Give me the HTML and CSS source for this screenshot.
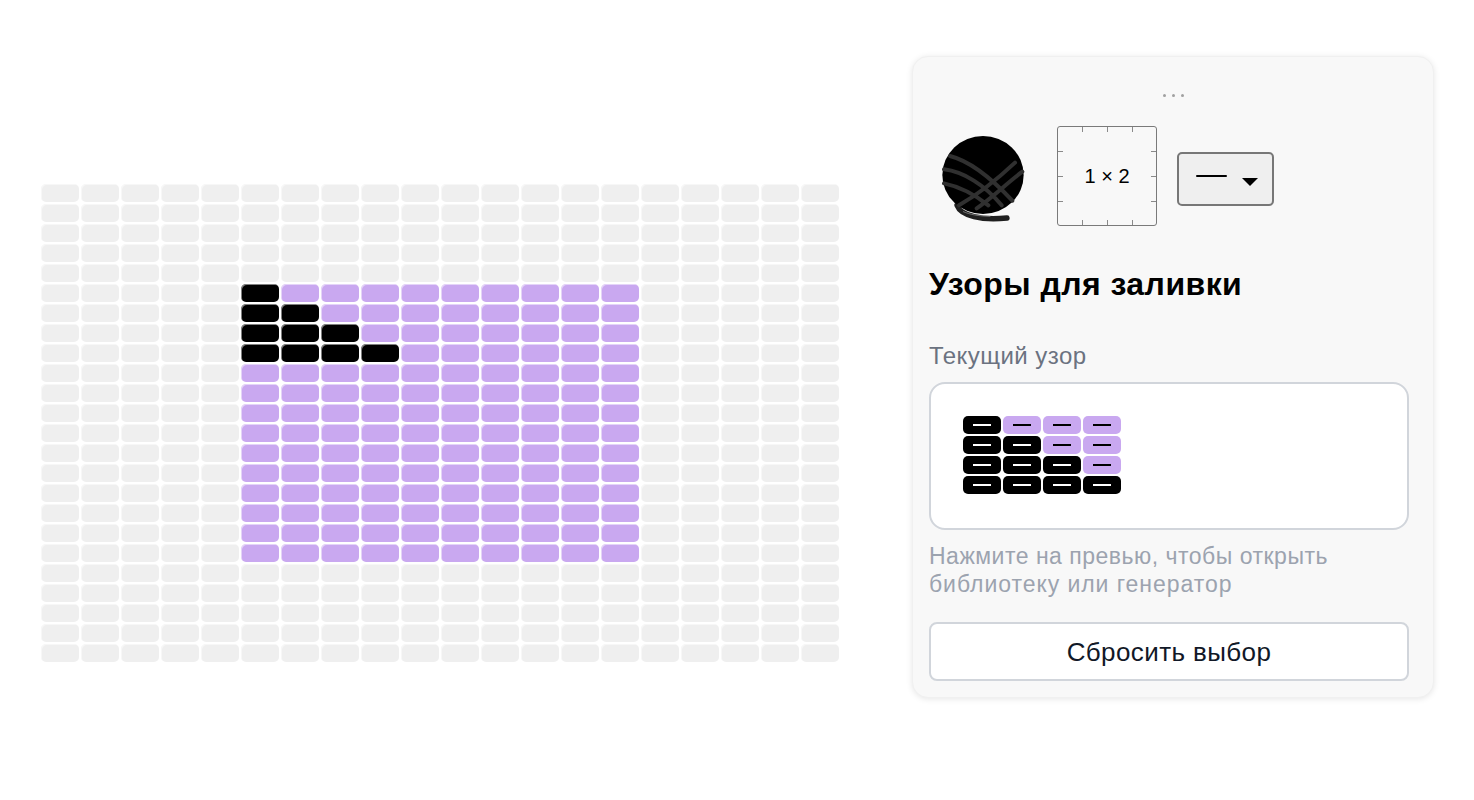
FILE: index.html
```html
<!DOCTYPE html>
<html lang="ru">
<head>
<meta charset="utf-8">
<title>Узоры для заливки</title>
<link rel="stylesheet" href="styles.css">
</head>
<body>
<main class="page">
  <div class="canvas" id="canvas"></div>
  <aside class="panel">
    <div class="handle"><i></i><i></i><i></i></div>
    <div class="tools">
      <svg class="yarn" width="100" height="100" viewBox="0 0 300 300">
        <path class="yarn-tail" d="M66 226 C78 258 140 272 216 264"/>
        <ellipse cx="144" cy="135" rx="122" ry="117"/>
        <path class="yarn-tail-gap" d="M85 245 C105 254 130 258 165 259"/>
        <path class="yarn-line" d="M45 78 C100 92 165 140 232 212 M27 118 C85 125 150 165 200 226 M27 160 C75 170 115 190 160 226 M72 226 C135 190 190 145 240 98 M125 235 C170 205 215 160 262 125"/>
      </svg>
      <div class="gauge">
        <span class="tick t1"></span><span class="tick t2"></span><span class="tick t3"></span>
        <span class="tick b1"></span><span class="tick b2"></span><span class="tick b3"></span>
        <span class="tick l1"></span><span class="tick l2"></span><span class="tick l3"></span>
        <span class="tick r1"></span><span class="tick r2"></span><span class="tick r3"></span>
        <span class="gauge-text">1 × 2</span>
      </div>
      <button class="stitch-select" type="button">
        <span class="stitch-line"></span>
        <span class="stitch-caret"></span>
      </button>
    </div>
    <h2 class="title">Узоры для заливки</h2>
    <div class="label">Текущий узор</div>
    <div class="preview">
      <div class="mini" id="mini"></div>
    </div>
    <p class="hint">Нажмите на превью, чтобы открыть<br><span class="hint-second">библиотеку или генератор</span></p>
    <button class="reset" type="button">Сбросить выбор</button>
  </aside>
</main>
<script src="script.js"></script>
</body>
</html>
```
FILE: styles.css
```css
* { box-sizing: border-box; }
html, body { margin: 0; padding: 0; background: #fff; }
body { font-family: "Liberation Sans", Arial, sans-serif; color: #000; width: 1474px; height: 800px; overflow: hidden; }

.page { display: flex; align-items: flex-start; padding: 56px 40px 0 41px; }

.canvas {
  display: grid;
  grid-template-columns: repeat(20, 38px);
  grid-auto-rows: 18px;
  gap: 2px;
  margin-top: 128px;
  flex: none;
}
.cell { border-radius: 5px; background: #efefef; box-shadow: inset 1px 1px 0 rgba(255,255,255,.5); }
.cell.purple { background: #c9a8f0; }
.cell.black { background: #000; }

.panel {
  margin-left: 73px;
  width: 522px;
  height: 642px;
  flex: none;
  background: #f8f8f8;
  border: 1px solid #f0f0f0;
  border-radius: 16px;
  box-shadow: 0 1px 6px rgba(0,0,0,.1);
  padding: 0 24px 0 16px;
  display: flex;
  flex-direction: column;
}
.handle { display: flex; justify-content: center; gap: 6px; margin-top: 37px; height: 3px; padding-left: 8px; }
.handle i { width: 3px; height: 3px; border-radius: 50%; background: #a0a0a0; }

.tools { display: flex; align-items: flex-start; margin-top: 29px; height: 100px; }
.yarn { flex: none; width: 100px; height: 100px; margin-left: 6px; margin-top: 4px; }
.yarn ellipse { fill: #000; }
.yarn-line { fill: none; stroke: #303030; stroke-width: 12; stroke-linecap: round; }
.yarn-tail { fill: none; stroke: #1f1f1f; stroke-width: 16; stroke-linecap: round; }
.yarn-tail-gap { fill: none; stroke: #bdbdbd; stroke-width: 1.5; stroke-linecap: round; }

.gauge {
  position: relative;
  flex: none;
  width: 100px;
  height: 100px;
  margin-left: 22px;
  border: 1px solid #7a7a7a;
  border-radius: 3px;
  display: flex;
  align-items: center;
  justify-content: center;
}
.gauge-text { font-size: 20px; }
.tick { position: absolute; background: #8a8a8a; }
.t1, .t2, .t3, .b1, .b2, .b3 { width: 1px; height: 5px; }
.l1, .l2, .l3, .r1, .r2, .r3 { width: 5px; height: 1px; }
.t1, .t2, .t3 { top: 0; }
.b1, .b2, .b3 { bottom: 0; }
.l1, .l2, .l3 { left: 0; }
.r1, .r2, .r3 { right: 0; }
.t1, .b1 { left: 24px; }
.t2, .b2 { left: 49px; }
.t3, .b3 { left: 74px; }
.l1, .r1 { top: 24px; }
.l2, .r2 { top: 49px; }
.l3, .r3 { top: 74px; }

.stitch-select {
  flex: none;
  width: 97px;
  height: 54px;
  margin-left: 20px;
  margin-top: 26px;
  padding: 0;
  background: #efefef;
  border: 2px solid #777;
  border-radius: 5px;
  position: relative;
}
.stitch-line { position: absolute; left: 17px; top: 21px; width: 31px; height: 2px; background: #000; border-radius: 1px; }
.stitch-caret { position: absolute; left: 63px; top: 24px; width: 0; height: 0; border-left: 8px solid transparent; border-right: 8px solid transparent; border-top: 8px solid #000; }

.title { margin: 40px 0 0; font-size: 32px; line-height: 36px; font-weight: 700; letter-spacing: .45px; }
.label { margin-top: 40px; font-size: 24px; line-height: 28px; color: #6b7280; letter-spacing: .45px; }
.preview {
  margin-top: 12px;
  width: 480px;
  height: 148px;
  background: #fff;
  border: 2px solid #d1d5db;
  border-radius: 16px;
  padding: 32px;
}
.mini { display: grid; grid-template-columns: repeat(4, 38px); grid-auto-rows: 18px; gap: 2px; }
.mini-cell { position: relative; border-radius: 5px; background: #c9a8f0; }
.mini-cell::after { content: ""; position: absolute; left: 10px; right: 10px; top: 8px; height: 2px; background: #000; }
.mini-cell.black { background: #000; }
.mini-cell.black::after { background: #fff; }

.hint { margin: 12px 0 0; font-size: 23px; line-height: 28px; color: #9ca3af; letter-spacing: .5px; }
.hint-second { letter-spacing: .95px; }
.reset {
  margin-top: 24px;
  width: 480px;
  height: 59px;
  background: #fff;
  border: 2px solid #d1d5db;
  border-radius: 8px;
  font-family: inherit;
  font-size: 26px;
  letter-spacing: .4px;
  color: #111827;
  padding: 2px 0 0;
}
```
FILE: script.js
```js
var canvas = document.getElementById('canvas');
var blackTo = { 5: 1, 6: 2, 7: 3, 8: 4 };
for (var r = 0; r < 24; r++) {
  for (var c = 0; c < 20; c++) {
    var cell = document.createElement('div');
    cell.className = 'cell';
    if (r >= 5 && r <= 18 && c >= 5 && c <= 14) {
      cell.className += (blackTo[r] && c - 5 < blackTo[r]) ? ' black' : ' purple';
    }
    canvas.appendChild(cell);
  }
}
var mini = document.getElementById('mini');
for (var y = 0; y < 4; y++) {
  for (var x = 0; x < 4; x++) {
    var m = document.createElement('div');
    m.className = 'mini-cell' + (x <= y ? ' black' : '');
    mini.appendChild(m);
  }
}
```
